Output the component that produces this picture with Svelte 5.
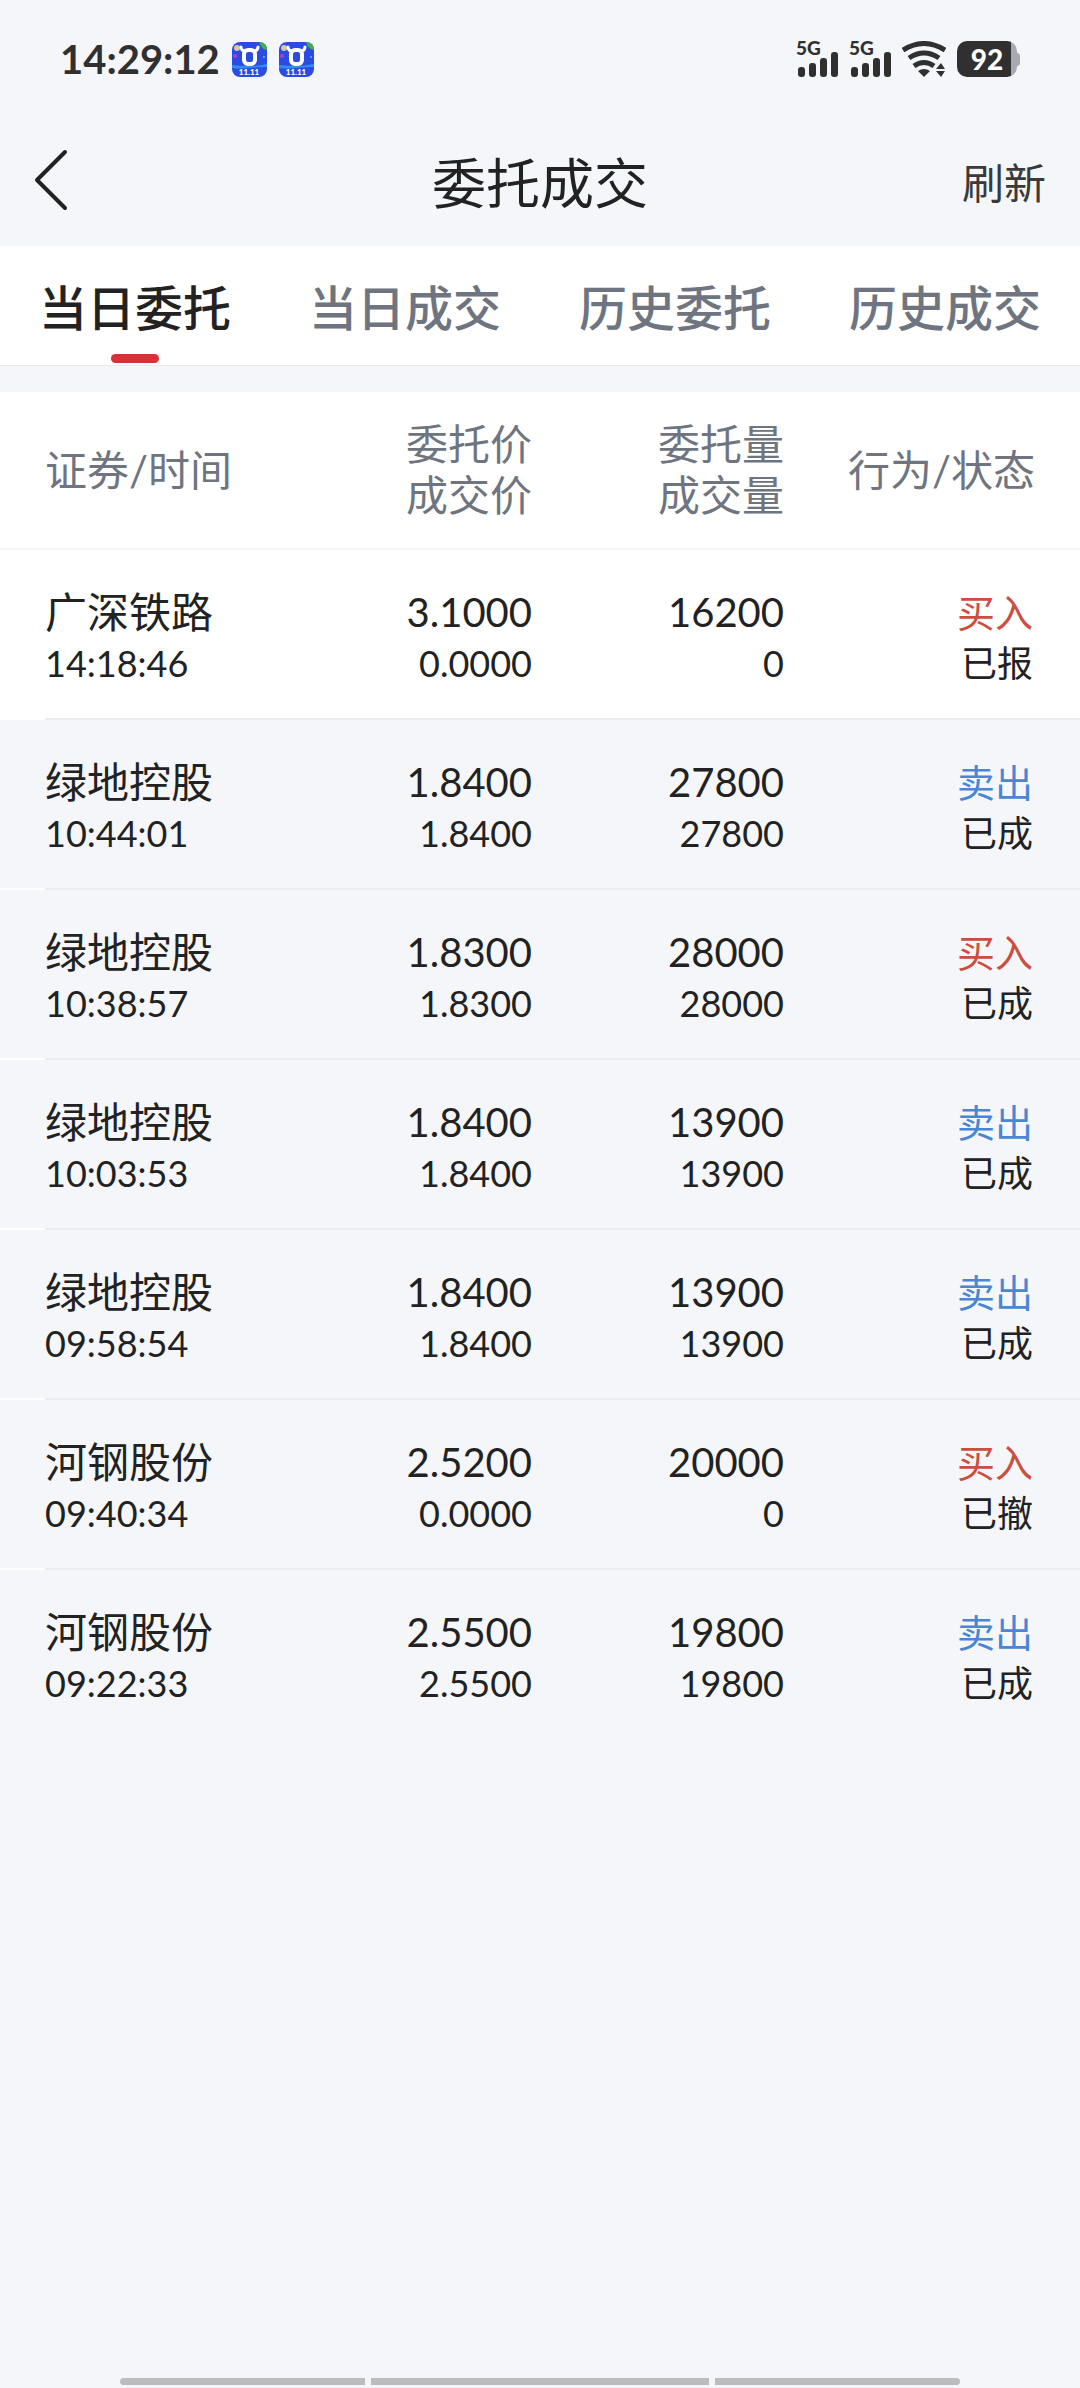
<script lang="ts">
  interface Order {
    name: string
    time: string
    price: string
    dealPrice: string
    volume: string
    dealVolume: string
    side: 'buy' | 'sell'
    status: string
  }

  const sideLabels = { buy: '买入', sell: '卖出' }

  const tabs = ['当日委托', '当日成交', '历史委托', '历史成交']

  const orders: Order[] = [
    { name: '广深铁路', time: '14:18:46', price: '3.1000', dealPrice: '0.0000', volume: '16200', dealVolume: '0', side: 'buy', status: '已报' },
    { name: '绿地控股', time: '10:44:01', price: '1.8400', dealPrice: '1.8400', volume: '27800', dealVolume: '27800', side: 'sell', status: '已成' },
    { name: '绿地控股', time: '10:38:57', price: '1.8300', dealPrice: '1.8300', volume: '28000', dealVolume: '28000', side: 'buy', status: '已成' },
    { name: '绿地控股', time: '10:03:53', price: '1.8400', dealPrice: '1.8400', volume: '13900', dealVolume: '13900', side: 'sell', status: '已成' },
    { name: '绿地控股', time: '09:58:54', price: '1.8400', dealPrice: '1.8400', volume: '13900', dealVolume: '13900', side: 'sell', status: '已成' },
    { name: '河钢股份', time: '09:40:34', price: '2.5200', dealPrice: '0.0000', volume: '20000', dealVolume: '0', side: 'buy', status: '已撤' },
    { name: '河钢股份', time: '09:22:33', price: '2.5500', dealPrice: '2.5500', volume: '19800', dealVolume: '19800', side: 'sell', status: '已成' },
  ]

  let activeTab = $state(0)
</script>

{#snippet appIcon()}
  <svg class="app-icon" viewBox="0 0 35 35" aria-hidden="true">
    <rect width="35" height="35" rx="8" fill="#2c4be2" />
    <path d="M0 23q9 1 17 1t18-2v3q-9 0-18 1T0 26z" fill="#2f8df5" />
    <path d="M27 0q8 0 8 8-6-1-8-8z" fill="#3fae4e" />
    <circle cx="5" cy="6" r="3" fill="#d9c6a5" />
    <circle cx="3" cy="14" r="2" fill="#b03fd0" />
    <circle cx="32" cy="15" r="1" fill="#7fa4ff" />
    <rect x="12" y="8" width="11" height="14" rx="4" fill="none" stroke="#fff" stroke-width="4" />
    <path
      d="M9 5q0 4 5 4M26 5q0 4-5 4"
      fill="none"
      stroke="#fff"
      stroke-width="3"
      stroke-linecap="round"
    />
    <text x="17" y="33" text-anchor="middle" font-size="8" font-weight="900" fill="#fff">11.11</text>
  </svg>
{/snippet}

{#snippet signal()}
  <span class="signal">
    <span class="network">5G</span>
    <svg viewBox="0 0 42 36" aria-hidden="true">
      <rect x="2" y="26" width="7" height="10" rx="3" />
      <rect x="13" y="22" width="7" height="14" rx="3" />
      <rect x="24" y="17" width="7" height="19" rx="3" />
      <rect x="35" y="11" width="7" height="25" rx="3" />
    </svg>
  </span>
{/snippet}

<div class="screen">
  <div class="status-bar">
    <div class="status-group left">
      <span class="clock">14:29:12</span>
      {@render appIcon()}
      {@render appIcon()}
    </div>
    <div class="status-group">
      {@render signal()}
      {@render signal()}
      <svg class="wifi" viewBox="0 0 44 36" aria-hidden="true">
        <g fill="none" stroke="#303030" stroke-width="5">
          <path d="M1 9Q22-4 43 9" />
          <path d="M7 17Q22 7 37 17" />
          <path d="M12 25Q22 18 32 25" />
        </g>
        <path d="M16 30q6-4 12 0l-6 6z" />
        <path d="M34 28h9l-4-6zM34 30h9l-4 6z" />
      </svg>
      <span class="battery">92</span>
    </div>
  </div>

  <header>
    <button class="back" aria-label="返回">
      <svg viewBox="0 0 34 62" aria-hidden="true">
        <path d="M31 3L3 31l28 28" />
      </svg>
    </button>
    <h1>委托成交</h1>
    <button class="refresh">刷新</button>
  </header>

  <nav>
    {#each tabs as tab, i}
      <button class:active={activeTab === i} onclick={() => (activeTab = i)}>{tab}</button>
    {/each}
  </nav>

  <table>
    <thead>
      <tr>
        <th>证券/时间</th>
        <th class="amount">委托价<br />成交价</th>
        <th class="amount">委托量<br />成交量</th>
        <th class="action">行为/状态</th>
      </tr>
    </thead>
    <tbody>
      {#each orders as order (order.time)}
        <tr class:pending={order.status === '已报'}>
          <td>
            <div class="main">{order.name}</div>
            <div class="sub">{order.time}</div>
          </td>
          <td>
            <div class="main num">{order.price}</div>
            <div class="sub">{order.dealPrice}</div>
          </td>
          <td>
            <div class="main num">{order.volume}</div>
            <div class="sub">{order.dealVolume}</div>
          </td>
          <td>
            <div class="main side {order.side}">{sideLabels[order.side]}</div>
            <div class="sub">{order.status}</div>
          </td>
        </tr>
      {/each}
    </tbody>
  </table>

  <div class="gesture-bar">
    <span></span>
    <span></span>
    <span></span>
  </div>
</div>

<style>
  :global(body) {
    background: #f4f6fa;
  }

  .screen {
    display: flex;
    flex-direction: column;
    min-height: 100vh;
    background: #f4f6fa;
    color: #222;
    font-family: Lato, 'Noto Sans CJK SC', sans-serif;
  }

  button {
    padding: 0;
    border: 0;
    background: none;
    color: inherit;
    font: inherit;
    cursor: pointer;
  }

  .status-bar {
    display: flex;
    justify-content: space-between;
    align-items: center;
    height: 118px;
    padding: 0 60px;
    color: #303030;
    fill: #303030;
  }

  .status-group {
    display: flex;
    align-items: center;
    gap: 11px;
  }

  .left {
    gap: 12px;
  }

  .clock {
    font-size: 40px;
    font-weight: 700;
  }

  .app-icon {
    width: 35px;
    height: 35px;
  }

  .signal {
    position: relative;
    width: 42px;
    height: 36px;
  }

  .signal svg {
    display: block;
  }

  .network {
    position: absolute;
    top: 0;
    left: 0;
    font-size: 19px;
    font-weight: 900;
    line-height: 14px;
  }

  .wifi {
    width: 44px;
    height: 36px;
  }

  .battery {
    position: relative;
    width: 60px;
    margin-right: 3px;
    border-radius: 10px;
    background: linear-gradient(to right, #303030 54px, #a9aab0 54px);
    color: #fff;
    font-size: 28px;
    font-weight: 900;
    line-height: 36px;
    text-align: center;
  }

  .battery::after {
    content: '';
    position: absolute;
    top: 12px;
    right: -3px;
    width: 3px;
    height: 13px;
    border-radius: 0 3px 3px 0;
    background: #a9aab0;
  }

  header {
    display: grid;
    grid-template-columns: 1fr auto 1fr;
    align-items: center;
    height: 124px;
    padding: 0 34px 4px;
  }

  .back {
    justify-self: start;
  }

  .back svg {
    display: block;
    width: 34px;
    height: 62px;
    fill: none;
    stroke: #222;
    stroke-width: 4;
    stroke-linecap: round;
    stroke-linejoin: round;
  }

  h1 {
    margin: 0;
    font-size: 54px;
    font-weight: 400;
  }

  .refresh {
    justify-self: end;
    color: #3a3a3a;
    font-size: 42px;
  }

  nav {
    display: grid;
    grid-template-columns: repeat(4, 1fr);
    height: 119px;
    border-bottom: 1px solid #e8eaee;
    background: #fff;
  }

  nav button {
    position: relative;
    padding-bottom: 2px;
    color: #6f7580;
    font-size: 48px;
    font-weight: 500;
  }

  nav .active {
    color: #222;
  }

  nav .active::after {
    content: '';
    position: absolute;
    bottom: 2px;
    left: 50%;
    width: 48px;
    height: 9px;
    margin-left: -24px;
    border-radius: 5px;
    background: #d23337;
  }

  table {
    width: 100%;
    margin-top: 26px;
    border-spacing: 0;
    table-layout: fixed;
    background: #fff;
  }

  th {
    box-sizing: border-box;
    height: 158px;
    padding: 0;
    border-bottom: 2px solid #f4f5f7;
    color: #6f7580;
    font-size: 42px;
    font-weight: 400;
    line-height: 51px;
    text-align: right;
  }

  .amount {
    width: 252px;
  }

  .action {
    width: 296px;
    padding-right: 45px;
  }

  td {
    padding: 37px 0 29px;
    border-bottom: 2px solid #eaecf1;
    background: #f4f6fa;
    text-align: right;
  }

  .pending td {
    background: #fff;
  }

  th:first-child,
  td:first-child {
    padding-left: 45px;
    text-align: left;
  }

  td:last-child {
    padding-right: 47px;
  }

  td:first-child {
    position: relative;
  }

  /* the divider starts at the text, the table shows through before it */
  td:first-child::after {
    content: '';
    position: absolute;
    bottom: -2px;
    left: 0;
    width: 45px;
    height: 2px;
    background: #fff;
  }

  tbody tr:last-child td {
    border-color: #f4f6fa;
  }

  tbody tr:last-child td::after {
    display: none;
  }

  .main {
    font-size: 42px;
    line-height: 51px;
  }

  .num {
    font-size: 40px;
  }

  .sub {
    font-size: 36px;
    line-height: 51px;
  }

  .side {
    font-size: 38px;
  }

  .buy {
    color: #cc4e3f;
  }

  .sell {
    color: #4a86d4;
  }

  .gesture-bar {
    display: grid;
    grid-template-columns: 245fr 338fr 245fr;
    gap: 6px;
    margin: auto 120px 3px;
  }

  .gesture-bar span {
    height: 7px;
    background: #babcbe;
  }

  .gesture-bar span:first-child {
    border-radius: 4px 0 0 4px;
  }

  .gesture-bar span:last-child {
    border-radius: 0 4px 4px 0;
  }
</style>
